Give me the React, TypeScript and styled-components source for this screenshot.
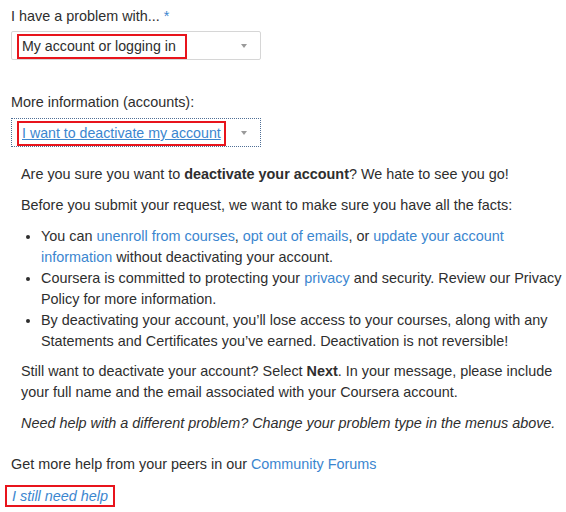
import React from 'react';
import styled, { createGlobalStyle } from 'styled-components';

const GlobalStyle = createGlobalStyle`
    body {
        margin: 0;
        background: #ffffff;
        font-family: 'Liberation Sans', Arial, sans-serif;
        font-size: 14.4px;
        color: #2e2e2e;
    }
`;

const linkColor = '#3b86cf';

const Page = styled.div`
    padding: 6px 0 0 11px;
    width: 566px;
    box-sizing: border-box;
`;

const Label = styled.div<{ gap: number }>`
    line-height: 20px;
    margin-top: ${(p) => p.gap}px;
`;

const Required = styled.span`
    color: ${linkColor};
`;

const SelectBox = styled.div<{ focused?: boolean; gap: number }>`
    display: flex;
    align-items: flex-start;
    box-sizing: border-box;
    width: 250px;
    height: 29px;
    margin-top: ${(p) => p.gap}px;
    padding: 2px 0 0 5px;
    border: 1px ${(p) => (p.focused ? 'dotted #4f6f96' : 'solid #d6d6d6')};
    border-radius: ${(p) => (p.focused ? 0 : 2)}px;
    background: #fff;
`;

const Marked = styled.span<{ width: number }>`
    display: inline-block;
    box-sizing: border-box;
    width: ${(p) => p.width}px;
    height: 25px;
    line-height: 21px;
    padding-left: 3px;
    border: 2px solid #e8141c;
    font-size: 14.2px;
    white-space: nowrap;
`;

const Caret = styled.span`
    margin: 10px 13px 0 auto;
    width: 0;
    height: 0;
    border-left: 3px solid transparent;
    border-right: 3px solid transparent;
    border-top: 4px solid #9a9a9a;
`;

const Link = styled.a<{ underline?: boolean }>`
    color: ${linkColor};
    text-decoration: ${(p) => (p.underline ? 'underline' : 'none')};
    cursor: pointer;
`;

const Content = styled.div`
    margin-top: 17px;
    padding-left: 10px;
    line-height: 21px;
`;

const Para = styled.p<{ italic?: boolean }>`
    margin: 0 0 10px;
    font-style: ${(p) => (p.italic ? 'italic' : 'normal')};
`;

const List = styled.ul`
    margin: 0 0 9px;
    padding-left: 20px;
`;

const Footer = styled.div`
    margin-top: 20px;
    line-height: 21px;
`;

const HelpBox = styled.div`
    display: inline-block;
    box-sizing: border-box;
    margin: 10px 0 0 -6px;
    height: 22px;
    padding: 0 5px 0 5px;
    border: 2px solid #e8141c;
    line-height: 18px;
    font-style: italic;
`;

const App: React.FC = () => (
    <>
        <GlobalStyle />
        <Page>
            <Label gap={0}>
                I have a problem with... <Required>*</Required>
            </Label>
            <SelectBox gap={5}>
                <Marked width={170}>My account or logging in</Marked>
                <Caret />
            </SelectBox>

            <Label gap={32}>More information (accounts):</Label>
            <SelectBox focused={true} gap={6}>
                <Marked width={209}>
                    <Link underline={true}>I want to deactivate my account</Link>
                </Marked>
                <Caret />
            </SelectBox>

            <Content>
                <Para>
                    Are you sure you want to <strong>deactivate your account</strong>? We hate to see you go!
                </Para>
                <Para>Before you submit your request, we want to make sure you have all the facts:</Para>
                <List>
                    <li>
                        You can <Link>unenroll from courses</Link>, <Link>opt out of emails</Link>, or{' '}
                        <Link>update your account information</Link> without deactivating your account.
                    </li>
                    <li>
                        Coursera is committed to protecting your <Link>privacy</Link> and security. Review our
                        Privacy Policy for more information.
                    </li>
                    <li>
                        By deactivating your account, you’ll lose access to your courses, along with any
                        Statements and Certificates you’ve earned. Deactivation is not reversible!
                    </li>
                </List>
                <Para>
                    Still want to deactivate your account? Select <strong>Next</strong>. In your message, please
                    include your full name and the email associated with your Coursera account.
                </Para>
                <Para italic={true}>
                    Need help with a different problem? Change your problem type in the menus above.
                </Para>
            </Content>

            <Footer>
                Get more help from your peers in our <Link>Community Forums</Link>
            </Footer>
            <HelpBox>
                <Link>I still need help</Link>
            </HelpBox>
        </Page>
    </>
);

export default App;
